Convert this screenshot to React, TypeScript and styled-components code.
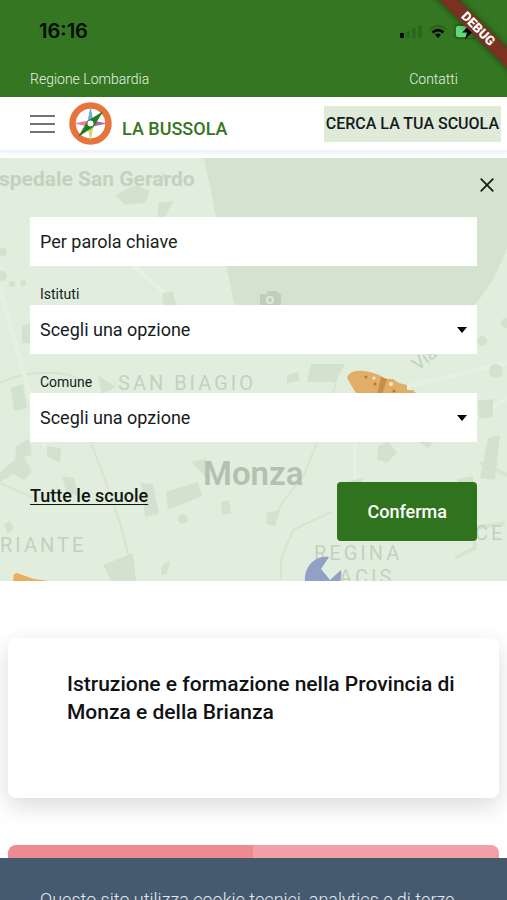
import React from "react";
import styled, { createGlobalStyle } from "styled-components";

const GlobalStyle = createGlobalStyle`
  *, *::before, *::after { box-sizing: border-box; }
  body { margin: 0; background: #fff; }
  body, button, input, select {
    font-family: Roboto, "Liberation Sans", sans-serif;
    color: #151b1e;
  }
`;

const green = "#347621";

const Screen = styled.div`
  height: 100vh;
  display: flex;
  flex-direction: column;
  overflow: hidden;
`;

const Scroller = styled.div`
  flex: 1;
  min-height: 0;
  overflow: hidden;
`;

const TopArea = styled.div`
  background: ${green};
  position: relative;
`;

const StatusBar = styled.div`
  height: 62px;
  padding: 0 26px 0 39px;
  display: flex;
  align-items: center;
  justify-content: space-between;
`;

const Clock = styled.time`
  font: 600 20px/24px Inter, sans-serif;
  color: #050a03;
`;

const Ribbon = styled.div`
  position: absolute;
  top: 0;
  right: 0;
  width: 80px;
  height: 80px;
  overflow: hidden;
`;

const RibbonBand = styled.span`
  position: absolute;
  left: -9px;
  top: 22px;
  width: 120px;
  height: 14px;
  transform: rotate(45deg);
  background: #793222;
  box-shadow: 0 0 6px rgba(0, 0, 0, 0.5);
  color: #fff;
  font: 900 13px/14px Roboto, sans-serif;
  text-align: center;
`;

const UtilityNav = styled.nav`
  height: 35px;
  padding: 0 49px 0 30px;
  display: flex;
  justify-content: space-between;
`;

const UtilityLink = styled.a`
  font-size: 14px;
  font-weight: 300;
  line-height: 34px;
  color: #e8f2e4;
  text-decoration: none;
`;

const Header = styled.header`
  height: 55px;
  padding: 0 6px 0 30px;
  display: flex;
  align-items: center;
  background: #fff;
  border-bottom: 2px solid #f1f2f5;
  box-shadow: 0 1px 4px #eceef2;
`;

const IconButton = styled.button`
  display: flex;
  padding: 0;
  border: 0;
  background: none;
  cursor: pointer;
`;

const Brand = styled.a`
  display: flex;
  align-items: center;
  gap: 10px;
  margin: 0 auto 0 14px;
  color: ${green};
  text-decoration: none;
`;

const BrandName = styled.span`
  padding-top: 10px;
  font-size: 18px;
  line-height: 24px;
  font-weight: 500;
`;

const SearchToggle = styled.button`
  height: 36px;
  padding: 0 2px;
  border: 0;
  background: #dfead8;
  font-size: 16px;
  font-weight: 500;
  white-space: nowrap;
`;

const SearchPanel = styled.section`
  position: relative;
  margin-top: 6px;
  overflow: hidden;
  background: #e1eedd;
`;

const MapArt = styled.svg`
  position: absolute;
  inset: 0;
  width: 100%;
  height: 100%;
`;

const SearchForm = styled.form`
  position: relative;
  padding: 0 30px 40px;
  display: flex;
  flex-direction: column;
`;

const CloseRow = styled.div`
  height: 59px;
  padding-top: 20px;
  margin-right: -17px;
  display: flex;
  align-items: flex-start;
  justify-content: flex-end;
`;

const KeywordInput = styled.input`
  width: 100%;
  height: 49px;
  padding: 0 10px;
  border: 0;
  border-radius: 0;
  background: #fff;
  font-size: 18px;
  &::placeholder { color: #1b1f22; opacity: 1; }
`;

const FieldLabel = styled.label`
  padding: 18px 10px 1px;
  font-size: 14px;
  line-height: 20px;
`;

const SelectBox = styled.div`
  display: grid;
  align-items: center;
  background: #fff;
  > * { grid-area: 1 / 1; }
  > svg { justify-self: end; margin-right: 10px; pointer-events: none; }
`;

const Select = styled.select`
  appearance: none;
  width: 100%;
  height: 49px;
  padding: 0 34px 0 10px;
  border: 0;
  border-radius: 0;
  background: transparent;
  font-size: 18px;
`;

const Actions = styled.div`
  padding-top: 40px;
  display: flex;
  align-items: flex-start;
  justify-content: space-between;
`;

const AllSchools = styled.a`
  padding-top: 2px;
  font-size: 18px;
  line-height: 24px;
  font-weight: 500;
  color: #101510;
  text-underline-offset: 2px;
`;

const Confirm = styled.button`
  height: 59px;
  padding: 0 30px;
  border: 0;
  border-radius: 4px;
  background: #2f731e;
  color: #fff;
  font-size: 18px;
  font-weight: 500;
`;

const Card = styled.section`
  margin: 57px 8px 47px;
  min-height: 160px;
  padding: 32px 40px 40px 59px;
  border-radius: 8px;
  background: #fff;
  box-shadow: 0 8px 24px rgba(0, 0, 0, 0.15);
`;

const CardTitle = styled.h1`
  margin: 0;
  font-size: 21px;
  line-height: 28px;
  font-weight: 500;
  color: #101214;
`;

const PinkCard = styled.section`
  margin: 0 8px;
  height: 80px;
  border-radius: 8px;
  background: linear-gradient(90deg, #f08a91 50%, #f1a0a7 50%);
`;

const CookieBanner = styled.aside`
  height: 42px;
  padding: 30px 38px 0 40px;
  overflow: hidden;
  background: #455a6e;
`;

const CookieText = styled.p`
  margin: 0;
  font-size: 18px;
  line-height: 24px;
  font-weight: 300;
  color: #e3e9ee;
  white-space: nowrap;
`;

const StatusIcons = () => (
  <svg width="82" height="24" viewBox="0 0 82 24" aria-hidden="true">
    <rect x="1" y="14" width="4" height="5" rx="1" fill="#000" />
    <g fill="#2c681b">
      <rect x="7" y="12" width="4" height="7" rx="1" />
      <rect x="13" y="9" width="4" height="10" rx="1" />
      <rect x="19" y="6" width="4" height="13" rx="1" />
    </g>
    <g fill="none" strokeWidth="2.6">
      <path d="M31 10.500Q39 3.500 47 10.500" stroke="#2a6419" />
      <path d="M33.500 13.500Q39 8.800 44.500 13.500" stroke="#000" />
    </g>
    <path d="M36 15.500Q39 13.500 42 15.500L39 19Z" fill="#000" />
    <rect x="55.500" y="5.500" width="23" height="14" rx="4" fill="none" stroke="#28601b" strokeWidth="1.500" />
    <rect x="57" y="7" width="13" height="11" rx="2" fill="#62d878" />
    <path d="M72 4.500L63 13.500h5l-2 7L75 11.500h-5z" fill="#000" />
  </svg>
);

const MenuIcon = () => (
  <svg width="25" height="20" viewBox="0 0 25 20" aria-hidden="true">
    <path d="M0 2h25M0 10h25M0 18h25" stroke="#44484a" strokeWidth="1.500" />
  </svg>
);

const Compass = () => (
  <svg width="43" height="44" viewBox="0 0 43 44" aria-hidden="true">
    <circle cx="21.500" cy="21.500" r="18" fill="#fff" stroke="#e9733c" strokeWidth="6.500" />
    <path d="M21.500 4.500L25 22h-7z" fill="#6caed6" />
    <path d="M21.500 39L25 22h-7z" fill="#c8dc62" />
    <path d="M5 21.500l16.500-3.500v7z" fill="#ee7d92" />
    <path d="M38 21.500l-16.500-3.500v7z" fill="#a269b3" />
    <path d="M34.500 9L24.500 25l-6-6z" fill="#257a25" />
    <path d="M9 35l9.500-16 6 6z" fill="#257a25" />
    <circle cx="21.500" cy="21.500" r="3" fill="#fff" />
  </svg>
);

const CloseIcon = () => (
  <svg width="14" height="14" viewBox="0 0 14 14" aria-hidden="true">
    <path d="M0.700 0.700l12.600 12.600M13.300 0.700L0.700 13.300" stroke="#111a0f" strokeWidth="1.700" />
  </svg>
);

const Caret = () => (
  <svg width="10" height="6" viewBox="0 0 10 6" aria-hidden="true">
    <path d="M0 0h10L5 6z" fill="#000" />
  </svg>
);

const Map = () => (
  <MapArt viewBox="0 0 507 423" preserveAspectRatio="xMidYMin slice" aria-hidden="true">
    <path d="M204 0H507V90C495 120 489 130 473 149L470 165H238Z" fill="#d4e3cf" />
    <g fill="none" stroke="#d6e4d1" strokeWidth="2">
      <path d="M90 282l18 48 12 35 16 60" />
      <path d="M318 282l-14 35-22 28-10 20M331 354l-38 18-12 30v20" />
      <path d="M0 225q30-15 70-8l10 4M0 325l32 14M310 246l23-10 5-22" />
      <path d="M480 305l27 12M455 400l20-10v-20l30-5" strokeWidth="4" />
    </g>
    <path d="M507 205L400 230M355 282v40M507 240l-60 40M0 130l45 160M80 60l90 80" fill="none" stroke="#e6f1e2" strokeWidth="4" />
    <g fill="#d3e2ce">
      <path d="M115 37l20-10 15 6-5 12-20 2zM162 13l5 6-5 3zM158 45l16-2-5 8-5 10-6-1z" />
      <ellipse cx="90" cy="65" rx="9" ry="6" />
      <path d="M163 135l10-2 5 21h-16zM22 168l8-3v20h-8z" />
      <circle cx="3" cy="94" r="4" /><circle cx="2" cy="118" r="5" />
      <circle cx="12" cy="126" r="3" /><circle cx="23" cy="125" r="3" />
      <path d="M11 230l12-4 4 24-13 3zM98 217l18 12-14 7z" />
      <path d="M16 288l13-7 3 16-8 2 8 14-8 9-10-6-14 8v-10l15-12zM47 288l14 2-1 15-13-6zM62 318l12 2 4 18-12-4zM141 325l12 1 6 30-14 3zM166 334l32-10 4 14-34 14zM221 344l8-2 2 13-9 2zM192 304l14-4v20z" />
      <circle cx="183" cy="361" r="5" />
      <path d="M103 407l30-12 3 28h-25zM162 407l8-4-3 13-6 1zM4 366l6-3 4 7-6 6z" />
      <path d="M311 206h34l-10 18h-28zM287 217l12-3v9l-12 2zM478 243l15-2v18l-14 2zM488 280l12-3-5 45-15-2zM378 288l11-4 8 11-11 10-9-4zM416 282h19l-7 8zM267 354l13-1-5 15-9-2zM350 323l13-3-2 10-13 2zM457 321l16-3v7l-15 2z" />
      <circle cx="482" cy="183" r="5" /><circle cx="496" cy="213" r="7" /><circle cx="506" cy="165" r="5" />
    </g>
    <path d="M260 136h6l2-3h9l3 3h1v13h-21z" fill="#c2cdbe" />
    <circle cx="270" cy="142" r="4" fill="#dce9d6" />
    <circle cx="270" cy="142" r="2" fill="#c2cdbe" />
    <g fontFamily="Roboto, sans-serif" fill="#c4d1c0">
      <text x="-1" y="28" fontSize="21" fontWeight="700">spedale San Gerardo</text>
      <text x="118" y="232" fontSize="20" letterSpacing="3">SAN BIAGIO</text>
      <text x="0" y="394" fontSize="20" letterSpacing="3">RIANTE</text>
      <text x="314" y="402" fontSize="20" letterSpacing="3">REGINA</text>
      <text x="339" y="426" fontSize="20" letterSpacing="3">ACIS</text>
      <text x="475" y="382" fontSize="20" letterSpacing="3">CE</text>
      <text x="203" y="327" fontSize="33" fontWeight="600" fill="#b4c1b0">Monza</text>
      <text x="418" y="213" fontSize="18" transform="rotate(-38 418 213)">Via</text>
    </g>
    <path d="M347 220c2-9 17-9 32-3l7 4h7l6 4 8 2v5h6l5 5h-61z" fill="#e1ae68" />
    <path d="M381 219l6 2-5 16h-5z" fill="#c98e45" />
    <g fill="#ae7b3c">
      <circle cx="366" cy="219" r="1.500" /><circle cx="375" cy="226" r="1.500" />
      <circle cx="394" cy="233" r="1.500" />
    </g>
    <g fill="#f8ead0"><circle cx="374" cy="220" r="1.500" /><circle cx="391" cy="226" r="2" /></g>
    <path d="M13 423l1-7 3-1 17 6 15 2z" fill="#ebae61" />
    <path d="M305 423c-1-14 10-26 24-24l-8 12 9 11 11-10c1 4 0 8-1 11z" fill="#929fc7" />
  </MapArt>
);

type SelectFieldProps = { id: string; label: string };

const SelectField = ({ id, label }: SelectFieldProps) => (
  <>
    <FieldLabel htmlFor={id}>{label}</FieldLabel>
    <SelectBox>
      <Select id={id} defaultValue="">
        <option value="">Scegli una opzione</option>
      </Select>
      <Caret />
    </SelectBox>
  </>
);

export default function App() {
  return (
    <Screen>
      <GlobalStyle />
      <Scroller>
        <TopArea>
          <StatusBar>
            <Clock>16:16</Clock>
            <StatusIcons />
          </StatusBar>
          <UtilityNav>
            <UtilityLink href="#regione">Regione Lombardia</UtilityLink>
            <UtilityLink href="#contatti">Contatti</UtilityLink>
          </UtilityNav>
          <Ribbon><RibbonBand>DEBUG</RibbonBand></Ribbon>
        </TopArea>
        <Header>
          <IconButton type="button" aria-label="Menu"><MenuIcon /></IconButton>
          <Brand href="#home">
            <Compass />
            <BrandName>LA BUSSOLA</BrandName>
          </Brand>
          <SearchToggle type="button">CERCA LA TUA SCUOLA</SearchToggle>
        </Header>
        <SearchPanel>
          <Map />
          <SearchForm>
            <CloseRow>
              <IconButton type="button" aria-label="Chiudi"><CloseIcon /></IconButton>
            </CloseRow>
            <KeywordInput type="text" placeholder="Per parola chiave" aria-label="Per parola chiave" />
            <SelectField id="istituti" label="Istituti" />
            <SelectField id="comune" label="Comune" />
            <Actions>
              <AllSchools href="#scuole">Tutte le scuole</AllSchools>
              <Confirm type="button">Conferma</Confirm>
            </Actions>
          </SearchForm>
        </SearchPanel>
        <Card>
          <CardTitle>Istruzione e formazione nella Provincia di Monza e della Brianza</CardTitle>
        </Card>
        <PinkCard />
      </Scroller>
      <CookieBanner>
        <CookieText>Questo sito utilizza cookie tecnici, analytics e di terze</CookieText>
      </CookieBanner>
    </Screen>
  );
}
